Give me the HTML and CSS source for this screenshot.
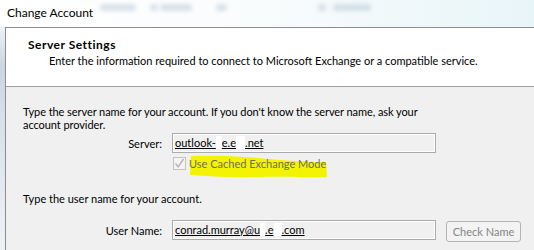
FILE: index.html
```html
<!DOCTYPE html>
<html>
<head>
<meta charset="utf-8">
<link rel="stylesheet" href="styles.css">
</head>
<body>
<div class="titlebar">
  <div class="blur"><span class="b1"></span><span class="b2"></span><span class="b3"></span><span class="b4"></span><span class="b5"></span><span class="b6"></span></div>
  <span class="title">Change Account</span>
</div>
<div class="frame">
  <div class="side"></div>
  <div class="panel">
    <div class="header">
      <div class="h-title">Server Settings</div>
      <div class="h-sub">Enter the information required to connect to Microsoft Exchange or a compatible service.</div>
    </div>
    <div class="content">
      <p class="intro">Type the server name for your account. If you don't know the server name, ask your<br>account provider.</p>
      <div class="row row-server">
        <label class="lbl">Server:</label>
        <div class="field"><span class="val">outlook-<span class="redact r1"></span>e.e<span class="redact r2"></span>.net</span></div>
      </div>
      <div class="check-row">
        <svg class="hl" width="140" height="24" viewBox="0 0 140 24"><path d="M2 1 C30 0 60 2 80 4 C100 6 120 7 137 7 L138 22 C120 23 100 21 70 22 C40 23 20 21 1 20 Z" fill="#f3f300"/></svg>
        <span class="checkbox"><svg width="11" height="11" viewBox="0 0 11 11"><path d="M1.5 5.5 L4.2 8.8 L9.5 1" fill="none" stroke="#b5b5b5" stroke-width="1.4"/></svg></span>
        <span class="check-label">Use Cached Exchange Mode</span>
      </div>
      <p class="intro2">Type the user name for your account.</p>
      <div class="row row-user">
        <label class="lbl">User Name:</label>
        <div class="field"><span class="val">conrad.murray@u<span class="redact r3"></span>.e<span class="redact r4"></span>.com</span></div>
        <button class="btn">Check Name</button>
      </div>
    </div>
  </div>
</div>
</body>
</html>
```

FILE: styles.css
```css
* { box-sizing: border-box; }
html, body { margin: 0; padding: 0; }
body {
  width: 534px;
  height: 250px;
  overflow: hidden;
  background: #ffffff;
  font-family: Lato, "Segoe UI", "Noto Sans", sans-serif;
  font-size: 11px;
  color: #000;
}
.titlebar {
  position: relative;
  height: 27px;
  background: linear-gradient(90deg, #ffffff 0%, #fafcfd 45%, #e8f5f8 100%);
}
.title {
  position: relative;
  display: inline-block;
  padding: 4px 0 0 7px;
  font-size: 12px;
  line-height: 18px;
}
.blur { position: absolute; inset: 0; filter: blur(2px); opacity: 0.3; }
.blur span { position: absolute; top: 4px; height: 7px; background: #8aa3b8; border-radius: 3px; }
.b1 { left: 100px; width: 36px; }
.b2 { left: 150px; width: 8px; }
.b3 { left: 160px; width: 32px; }
.b4 { left: 216px; width: 11px; border-radius: 6px; }
.b5 { left: 318px; width: 8px; }
.b6 { left: 333px; width: 38px; }
.frame { display: flex; height: 223px; }
.side {
  width: 5px;
  background: linear-gradient(180deg, #eef2f6 0%, #c9d5e0 18%, #d6e0ea 40%, #eef2f5 100%);
}
.panel {
  flex: 1;
  border-left: 1px solid #8c8c8c;
  border-top: 1px solid #8c8c8c;
  display: flex;
  flex-direction: column;
}
.header {
  background: #fff;
  height: 59px;
  padding: 9px 0 0 22px;
  border-bottom: 1px solid #a0a0a0;
}
.h-title { font-weight: bold; line-height: 16px; font-size: 12px; letter-spacing: 0.5px; }
.h-sub { padding-left: 21px; line-height: 16px; white-space: nowrap; }
.content {
  flex: 1;
  background: #f0f0f0;
  padding: 18px 0 0 17px;
}
.intro { margin: 0; line-height: 13px; white-space: nowrap; letter-spacing: -0.07px; }
.row { display: flex; align-items: center; height: 20px; }
.row-server { margin-top: 2px; }
.row-user { margin-top: 15px; }
.lbl { width: 139px; text-align: right; flex: none; }
.field {
  margin-left: 10px;
  width: 264px;
  height: 20px;
  border: 1px solid #ababab;
  box-shadow: inset 0 0 0 1px #fff;
  background: #f0f0f0;
  padding: 1px 0 0 2px;
  line-height: 16px;
  white-space: nowrap;
  overflow: hidden;
}
.val { text-decoration: underline; }
.redact { background: #fff; display: inline-block; height: 13px; vertical-align: -2px; }
.r1 { width: 6px; }
.r2 { width: 9px; }
.r3 { width: 5px; }
.r4 { width: 8px; }
.check-row {
  position: relative;
  display: flex;
  align-items: center;
  margin: 4px 0 0 150px;
  height: 13px;
}
.checkbox {
  position: relative;
  width: 13px;
  height: 13px;
  border: 1px solid #c2c2c2;
  background: #f4f4f4;
  display: flex;
  align-items: center;
  justify-content: center;
}
.check-label { position: relative; margin-left: 3px; color: #6f6f5a; }
.hl {
  position: absolute;
  left: 16px;
  top: -2px;
}
.intro2 { margin: 22px 0 0; line-height: 13px; }
.btn {
  margin-left: 10px;
  width: 75px;
  height: 21px;
  margin-top: 2px;
  border: 1px solid #b4b4b4;
  border-radius: 3px;
  background: #f3f3f3;
  color: #858585;
  font-family: inherit;
  font-size: 11px;
  padding: 0;
}
```
